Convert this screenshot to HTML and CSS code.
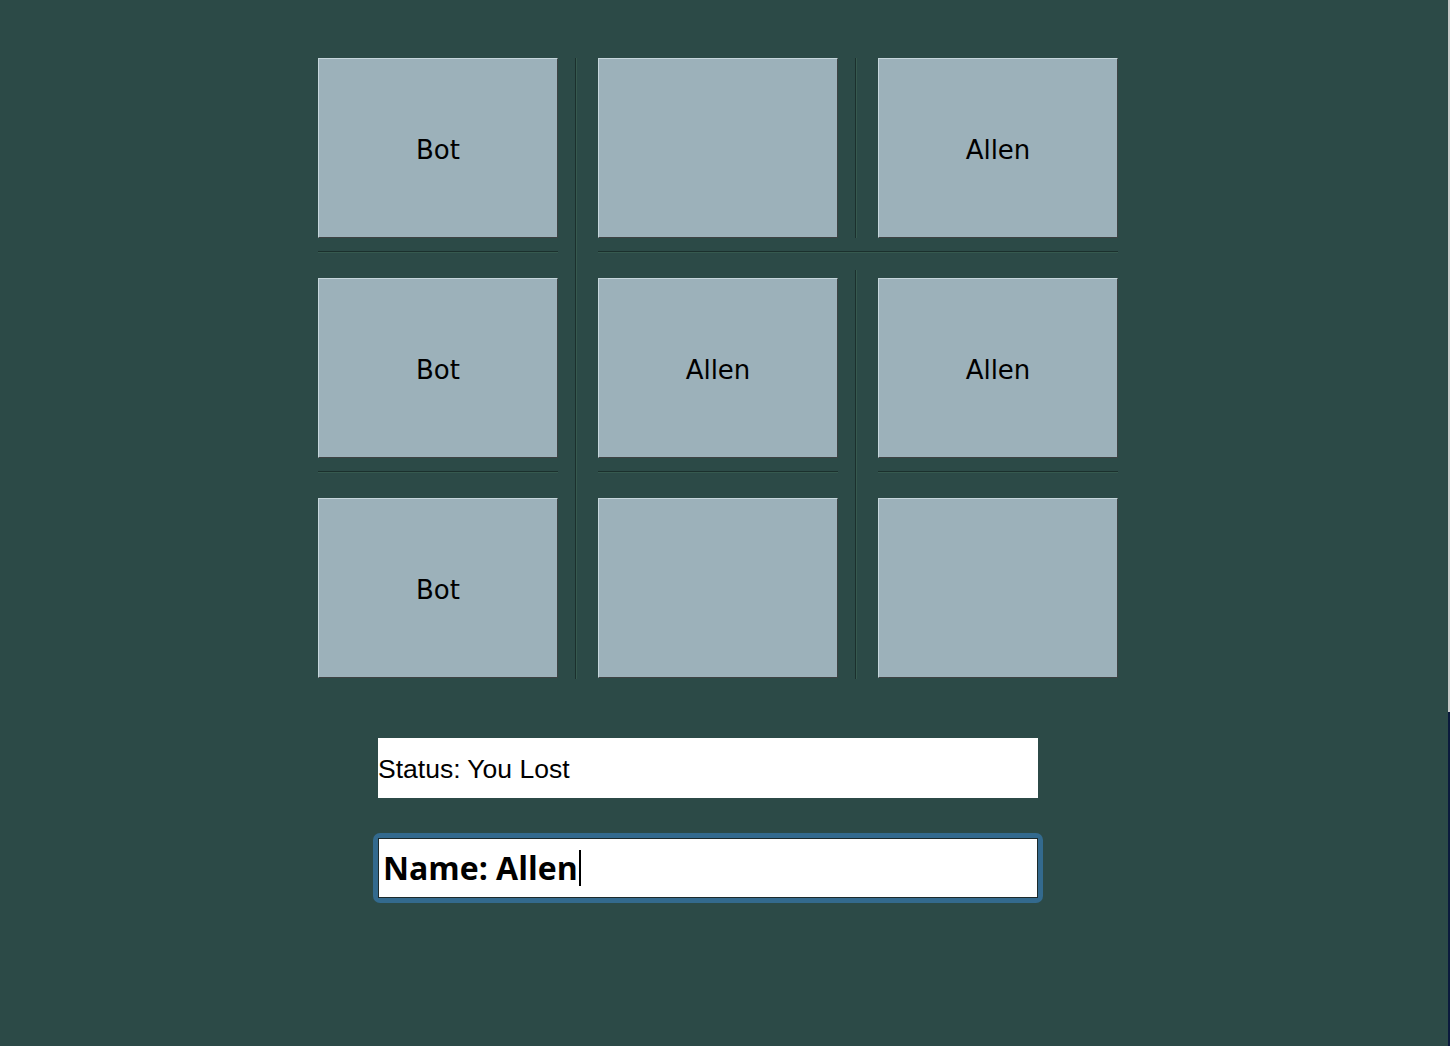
FILE: index.html
```html
<!DOCTYPE html>
<html>
<head>
<meta charset="utf-8">
<title>Tic Tac Toe</title>
<link rel="stylesheet" href="styles.css">
</head>
<body>
<main class="page">
  <div class="board">
    <button class="cell c1 r1">Bot</button>
    <button class="cell c3 r1"></button>
    <button class="cell c5 r1">Allen</button>
    <button class="cell c1 r3">Bot</button>
    <button class="cell c3 r3">Allen</button>
    <button class="cell c5 r3">Allen</button>
    <button class="cell c1 r5">Bot</button>
    <button class="cell c3 r5"></button>
    <button class="cell c5 r5"></button>

    <div class="vsep vsep-a"></div>
    <div class="vsep vsep-b1"></div>
    <div class="vsep vsep-b2"></div>
    <div class="hsep hsep-1a"></div>
    <div class="hsep hsep-1b"></div>
    <div class="hsep hsep-2a"></div>
    <div class="hsep hsep-2b"></div>
    <div class="hsep hsep-2c"></div>
  </div>

  <div class="status">Status: You Lost</div>

  <div class="name-ring">
    <div class="name-field">Name: Allen<span class="caret"></span></div>
  </div>
</main>
<div class="edge-strip"></div>
</body>
</html>
```

FILE: styles.css
```css
html, body {
  margin: 0;
  padding: 0;
  background: #2c4a47;
  height: 100%;
}

.page {
  padding: 58px 0 0 318px;
}

.board {
  display: grid;
  grid-template-columns: 240px 40px 240px 40px 240px;
  grid-template-rows: 180px 40px 180px 40px 180px;
  width: 800px;
}

.cell {
  box-sizing: border-box;
  margin: 0;
  padding: 0;
  background: #9cb1ba;
  border-style: solid;
  border-width: 1px;
  border-color: #c6d6dc #3e4344 #3e4344 #c6d6dc;
  font-family: "DejaVu Sans", sans-serif;
  font-size: 26px;
  color: #000;
  width: 240px;
  height: 180px;
  line-height: 1;
  padding-top: 4px;
}

.c1 { grid-column: 1; }
.c3 { grid-column: 3; }
.c5 { grid-column: 5; }
.r1 { grid-row: 1; }
.r3 { grid-row: 3; }
.r5 { grid-row: 5; }

.vsep {
  width: 1px;
  border-right: 1px solid #36594f;
  background: #1b302d;
  margin-left: 17px;
}
.vsep-a { grid-column: 2; grid-row: 1 / 6; margin-bottom: -1px; }
.vsep-b1 { grid-column: 4; grid-row: 1; }
.vsep-b2 { grid-column: 4; grid-row: 2 / 6; margin-top: 32px; margin-bottom: -1px; }

.hsep {
  height: 1px;
  border-bottom: 1px solid #36594f;
  background: #1b302d;
  margin-top: 13px;
  align-self: start;
}
.hsep-1a { grid-column: 1; grid-row: 2; }
.hsep-1b { grid-column: 3 / 6; grid-row: 2; }
.hsep-2a { grid-column: 1; grid-row: 4; }
.hsep-2b { grid-column: 3; grid-row: 4; }
.hsep-2c { grid-column: 5; grid-row: 4; }

.status {
  margin: 60px 0 0 60px;
  width: 660px;
  height: 60px;
  background: #fff;
  font-family: "Liberation Sans", Arial, sans-serif;
  font-size: 26.5px;
  line-height: 62px;
  color: #000;
}

.name-ring {
  margin: 35px 0 0 55px;
  width: 660px;
  padding: 5px;
  background: #336a8e;
  border-radius: 7px;
}

.name-field {
  box-sizing: border-box;
  height: 60px;
  background: #fff;
  border: 1px solid #1d2a2b;
  padding-left: 4px;
  font-family: "Open Sans", sans-serif;
  font-weight: 700;
  font-size: 32px;
  line-height: 58px;
  color: #000;
  display: flex;
  align-items: center;
}

.caret {
  display: inline-block;
  width: 2px;
  height: 36px;
  background: #000;
  margin-left: 1px;
}

.edge-strip {
  position: fixed;
  top: 0;
  right: 0;
  width: 2px;
  height: 100%;
  background: linear-gradient(#c9c9c9 0, #c9c9c9 712px, #0b1a3d 712px);
}
```
